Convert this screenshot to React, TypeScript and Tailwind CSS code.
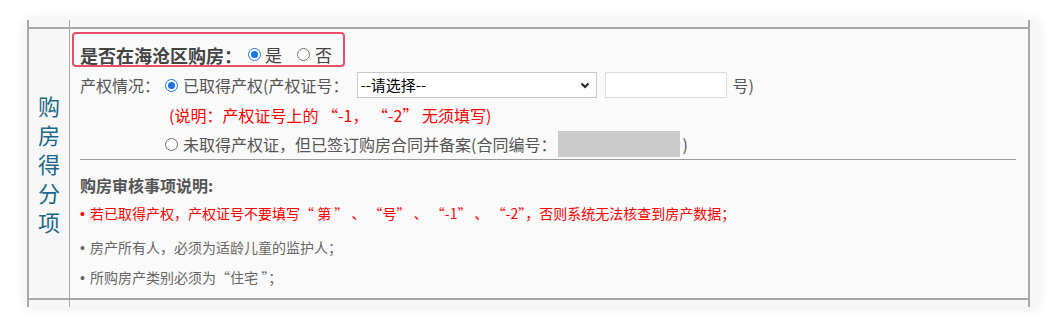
const font = { fontFamily: '"Noto Sans CJK SC", "Liberation Sans", sans-serif' };
const latin = { fontFamily: '"Liberation Sans", sans-serif' };

const Radio = ({ on }: { on?: boolean }) => (
  <span
    className={
      "inline-flex w-[13px] h-[13px] rounded-full items-center justify-center shrink-0 " +
      (on ? "border-[1.5px] border-[#1a73e8] bg-white" : "border border-[#6f6f6f] bg-white")
    }
  >
    {on && <span className="w-[7px] h-[7px] rounded-full bg-[#1a73e8]"></span>}
  </span>
);

const Stub = () => (
  <div className="flex h-[7px]">
    <div className="w-[41px] border-r border-[#a8a8a8]"></div>
    <div className="flex-1"></div>
  </div>
);

const Bullet = () => (
  <span className="inline-block w-[10px]" style={latin}>•</span>
);

const App = () => {
  return (
    <div className="w-[1058px] h-[328px] bg-white pt-5 pl-[26px]" style={font}>
      <div className="w-[1012px] h-[287px] bg-[#f7f7f7] shadow-[0_0_12px_rgba(0,0,0,0.09)]">
        <div className="ml-px w-[1003px] h-full border-x-2 border-[#a8a8a8] flex flex-col">
          <Stub />
          <div className="flex flex-1 border-y-2 border-[#a8a8a8]">
            <div className="w-[41px] border-r border-[#a8a8a8] flex flex-col items-center justify-center text-[22px] leading-[29px] text-[#1d6a88]">
              <span>购</span>
              <span>房</span>
              <span>得</span>
              <span>分</span>
              <span>项</span>
            </div>
            <div className="flex-1 bg-[#fafafa] flex flex-col">
              <div className="mt-[3px] ml-[2px] w-[273px] h-[35px] border-2 border-[#e8506a] rounded-[4px] flex items-center pl-[6px] pt-[10px]">
                <span className="text-[18px] font-bold text-[#444] leading-[20px]">是否在海沧区购房：</span>
                <span className="ml-[6px] flex items-center gap-[4px] text-[17px] text-[#444] leading-[20px]">
                  <Radio on />
                  <span>是</span>
                </span>
                <span className="ml-[15px] flex items-center gap-[5px] text-[17px] text-[#444] leading-[20px]">
                  <Radio />
                  <span>否</span>
                </span>
              </div>

              <div className="mt-[4px] h-[28px] flex items-center text-[16px] text-[#555] leading-[20px]">
                <span className="ml-[10px] w-[85px]">产权情况：</span>
                <Radio on />
                <span className="ml-[5px]">已取得产权(产权证号：</span>
                <div className="ml-[9px] w-[240px] h-[26px] border border-[#c8c8c8] bg-white flex items-center justify-between px-[2px] text-[15px] text-black">
                  <span>--请选择--</span>
                  <svg width="12" height="12" viewBox="0 0 12 12" className="mr-[3px]">
                    <path d="M2.5 4.5 L6 8 L9.5 4.5" fill="none" stroke="#222" strokeWidth="2" />
                  </svg>
                </div>
                <div className="ml-[8px] w-[122px] h-[26px] border border-[#dcdcdc] bg-white"></div>
                <span className="ml-[5px]">号)</span>
              </div>

              <div className="h-[31px] flex items-center pl-[99px] text-[16px] text-[#f00] leading-[20px]">
                (说明：产权证号上的 “-1， “-2” 无须填写)
              </div>

              <div className="h-[28px] flex items-center text-[16px] text-[#555] leading-[20px]">
                <span className="ml-[95px]"></span>
                <Radio />
                <span className="ml-[5px]">未取得产权证，但已签订购房合同并备案(合同编号：</span>
                <div className="ml-[2px] w-[122px] h-[26px] bg-[#cbcbcb]"></div>
                <span className="ml-[2px]">)</span>
              </div>

              <div className="mt-[1px] ml-[10px] w-[936px] border-t border-[#9c9c9c]"></div>

              <div className="mt-[13px] ml-[10px] text-[16px] font-bold text-[#555] leading-[24px]">
                购房审核事项说明:
              </div>
              <div className="mt-[4px] ml-[10px] text-[14px] text-[#f00] leading-[24px] whitespace-pre">
                <Bullet />若已取得产权，产权证号不要填写“ 第 ” 、 “号” 、 “-1” 、 “-2”，否则系统无法核查到房产数据；
              </div>
              <div className="mt-[9px] ml-[10px] text-[14px] text-[#666] leading-[24px]">
                <Bullet />房产所有人，必须为适龄儿童的监护人；
              </div>
              <div className="mt-[5px] ml-[10px] text-[14px] text-[#666] leading-[24px] whitespace-pre">
                <Bullet />所购房产类别必须为“住宅 ”；
              </div>
            </div>
          </div>
          <Stub />
        </div>
      </div>
    </div>
  );
};

export default App;
